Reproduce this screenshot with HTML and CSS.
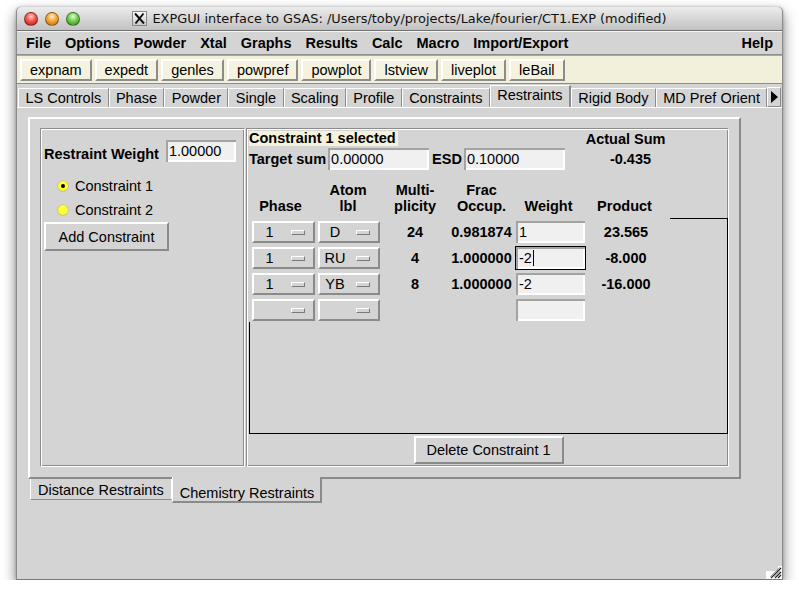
FILE: index.html
```html
<!DOCTYPE html>
<html>
<head>
<meta charset="utf-8">
<title>EXPGUI</title>
<link rel="stylesheet" href="styles.css">
</head>
<body>
<div class="window">
  <div class="titlebar">
    <div class="lights">
      <span class="light red"></span>
      <span class="light orange"></span>
      <span class="light green"></span>
    </div>
    <div class="title">
      <svg class="xicon" width="15" height="15" viewBox="0 0 15 15">
        <defs><linearGradient id="xg" x1="0" y1="0" x2="0" y2="1"><stop offset="0" stop-color="#fdfdfd"/><stop offset="1" stop-color="#c8c8c8"/></linearGradient></defs>
        <rect x="0.5" y="0.5" width="14" height="14" fill="url(#xg)" stroke="#8a8a8a"/>
        <path d="M3 2.5 L12 12.5 M11.5 2.5 L3.5 12.5" stroke="#111" stroke-width="2"/>
      </svg>
      <span>EXPGUI interface to GSAS: /Users/toby/projects/Lake/fourier/CT1.EXP (modified)</span>
    </div>
    <div></div>
  </div>

  <div class="menubar">
    <span class="menu-item">File</span>
    <span class="menu-item">Options</span>
    <span class="menu-item">Powder</span>
    <span class="menu-item">Xtal</span>
    <span class="menu-item">Graphs</span>
    <span class="menu-item">Results</span>
    <span class="menu-item">Calc</span>
    <span class="menu-item">Macro</span>
    <span class="menu-item">Import/Export</span>
    <span class="spacer"></span>
    <span class="menu-item">Help</span>
  </div>

  <div class="toolbar">
    <span class="tbtn">expnam</span>
    <span class="tbtn">expedt</span>
    <span class="tbtn">genles</span>
    <span class="tbtn">powpref</span>
    <span class="tbtn">powplot</span>
    <span class="tbtn">lstview</span>
    <span class="tbtn">liveplot</span>
    <span class="tbtn">leBail</span>
  </div>

  <div class="tabs">
    <span class="tab">LS Controls</span>
    <span class="tab">Phase</span>
    <span class="tab">Powder</span>
    <span class="tab">Single</span>
    <span class="tab">Scaling</span>
    <span class="tab">Profile</span>
    <span class="tab">Constraints</span>
    <span class="tab sel">Restraints</span>
    <span class="tab">Rigid Body</span>
    <span class="tab">MD Pref Orient</span>
    <span class="tab-arrow"><svg width="8" height="12" viewBox="0 0 8 12"><path d="M1 0 L8 6 L1 12 Z" fill="#000"/></svg></span>
  </div>

  <div class="page">
    <div class="nb">
      <div class="lpanel groove">
        <div class="weight-row">
          <span class="blabel wlabel">Restraint Weight</span>
          <span class="entry w-weight">1.00000</span>
        </div>
        <div class="radio-row first">
          <span class="radio on"></span>
          <span>Constraint 1</span>
        </div>
        <div class="radio-row">
          <span class="radio"></span>
          <span>Constraint 2</span>
        </div>
        <span class="button add-btn">Add Constraint</span>
      </div>

      <div class="rpanel groove">
        <div class="row-a">
          <span class="selected-label">Constraint 1 selected</span>
          <span class="blabel actual">Actual Sum</span>
        </div>
        <div class="row-b">
          <span class="blabel target">Target sum</span>
          <span class="entry w-long">0.00000</span>
          <span class="blabel esd">ESD</span>
          <span class="entry w-long">0.10000</span>
          <span class="blabel actual-val">-0.435</span>
        </div>

        <div class="grid head">
          <span>Phase</span>
          <span>Atom<br>lbl</span>
          <span>Multi-<br>plicity</span>
          <span>Frac<br>Occup.</span>
          <span>Weight</span>
          <span>Product</span>
        </div>

        <div class="box">
          <div class="grid rows">
            <span class="mbtn c1"><span class="mlabel">1</span><span class="ind"></span></span>
            <span class="mbtn c2"><span class="mlabel">D</span><span class="ind"></span></span>
            <span class="num">24</span>
            <span class="num">0.981874</span>
            <span class="entry w-weightcol">1</span>
            <span class="num">23.565</span>

            <span class="mbtn c1"><span class="mlabel">1</span><span class="ind"></span></span>
            <span class="mbtn c2"><span class="mlabel">RU</span><span class="ind"></span></span>
            <span class="num">4</span>
            <span class="num">1.000000</span>
            <span class="entry w-weightcol focus">-2<span class="cursor"></span></span>
            <span class="num">-8.000</span>

            <span class="mbtn c1"><span class="mlabel">1</span><span class="ind"></span></span>
            <span class="mbtn c2"><span class="mlabel">YB</span><span class="ind"></span></span>
            <span class="num">8</span>
            <span class="num">1.000000</span>
            <span class="entry w-weightcol">-2</span>
            <span class="num">-16.000</span>

            <span class="mbtn c1"><span class="mlabel"></span><span class="ind"></span></span>
            <span class="mbtn c2"><span class="mlabel"></span><span class="ind"></span></span>
            <span class="num"></span>
            <span class="num"></span>
            <span class="entry w-weightcol"></span>
            <span class="num"></span>
          </div>
        </div>

        <div class="del-wrap"><span class="button del-btn">Delete Constraint 1</span></div>
      </div>
    </div>

    <div class="btabs">
      <span class="btab">Distance Restraints</span>
      <span class="btab sel">Chemistry Restraints</span>
    </div>
  </div>

  <svg class="grip" width="16" height="15" viewBox="0 0 16 15">
    <rect x="0" y="0" width="16" height="15" fill="#fff"/>
    <rect x="0" y="0" width="16" height="2" fill="#d4d4d4"/>
    <rect x="0" y="0" width="12" height="7" fill="#d4d4d4"/>
    <path d="M15 4 L5 14 M15 8 L9 14 M15 11 L12 14" stroke="#222" stroke-width="1.2"/>
    <path d="M14 3 L4 13 M14 7 L8 13" stroke="#999" stroke-width="0.8"/>
  </svg>
</div>
</body>
</html>
```

FILE: styles.css
```css
* { box-sizing: border-box; }

body {
  margin: 0;
  background: #ffffff;
  font-family: "Liberation Sans", Arial, Helvetica, sans-serif;
  font-size: 14.5px;
  color: #000;
}

.window {
  margin: 7px 0 0 16px;
  width: 767px;
  height: 573px;
  background: #d4d4d4;
  display: flex;
  flex-direction: column;
  position: relative;
  border-left: 1px solid #8a8a8a;
  border-right: 1px solid #8a8a8a;
  border-bottom: 1px solid #7a7a7a;
  box-shadow: 0 6px 14px rgba(0, 0, 0, 0.5), 0 0 3px rgba(0,0,0,0.25);
  border-radius: 5px 5px 0 0;
}

/* title bar */
.titlebar {
  height: 24px;
  flex: none;
  display: grid;
  grid-template-columns: 1fr auto 1fr;
  align-items: center;
  background: linear-gradient(#ececec, #c2c2c2);
  border-bottom: 1px solid #707070;
  border-radius: 5px 5px 0 0;
}
.lights { display: flex; gap: 7px; padding-left: 7px; }
.light {
  width: 14px; height: 14px; border-radius: 50%;
  border: 1px solid rgba(0,0,0,0.35);
}
.red { background: radial-gradient(circle at 50% 30%, #ffd0c8 0, #f0574e 45%, #b8140f 100%); }
.orange { background: radial-gradient(circle at 50% 30%, #ffeccc 0, #f3a63b 45%, #c06a05 100%); }
.green { background: radial-gradient(circle at 50% 30%, #e0ffd0 0, #74cc4e 45%, #2f8a1a 100%); }

.title {
  display: flex;
  align-items: center;
  gap: 5px;
  font-family: "DejaVu Sans", "Lucida Grande", sans-serif;
  font-size: 12.9px;
  color: #111;
  white-space: nowrap;
}
.xicon { display: block; }

/* menu */
.menubar {
  height: 24px;
  flex: none;
  display: flex;
  align-items: center;
  padding: 0 2px;
  border-top: 1px solid #f4f4f4;
  border-bottom: 1px solid #8c8c8c;
  font-weight: bold;
}
.menu-item { padding: 0 7px; }
.spacer { flex: 1; }

/* toolbar */
.toolbar {
  height: 29px;
  flex: none;
  display: flex;
  align-items: center;
  gap: 3px;
  padding: 0 3px;
  background: #f2f0db;
  border-top: 1px solid #a8a8a8;
  border-bottom: 1px solid #8c8c8c;
}
.tbtn {
  height: 22px;
  display: flex;
  align-items: center;
  padding: 0 8px;
  background: #f5f3df;
  border: 2px solid;
  border-color: #ffffff #8c8c8c #8c8c8c #ffffff;
  white-space: nowrap;
}

/* tabs */
.tabs {
  height: 23px;
  flex: none;
  display: flex;
  align-items: flex-end;
  padding-left: 1px;
  overflow: hidden;
}
.tab {
  height: 19px;
  flex: none;
  white-space: nowrap;
  display: flex;
  align-items: center;
  padding: 0 6.4px;
  border-top: 1px solid #fff;
  border-left: 1px solid #fff;
  border-right: 1px solid #8c8c8c;
}
.tab.sel {
  height: 23px;
  margin-bottom: -1px;
  padding-bottom: 4px;
  background: #d4d4d4;
  position: relative;
  z-index: 1;
  border-right: 2px solid #8c8c8c;
}
.tab-arrow {
  flex: none;
  height: 20px;
  width: 14px;
  display: flex;
  align-items: center;
  justify-content: center;
  border: 1px solid;
  border-color: #fff #8c8c8c #8c8c8c #fff;
}

/* page */
.page {
  flex: 1;
  border-top: 1px solid #ffffff;
  padding: 9px 0 0 11px;
}
.nb {
  width: 713px;
  height: 362px;
  border: 2px solid;
  border-color: #ffffff #8a8a8a #8a8a8a #ffffff;
  display: flex;
  gap: 1px;
  padding: 9px 10px 10px 10px;
}
.groove {
  border: 1px solid;
  border-color: #8c8c8c #ffffff #ffffff #8c8c8c;
  box-shadow: inset 1px 1px 0 #ffffff, inset -1px -1px 0 #8c8c8c;
}
.lpanel {
  width: 205px;
  padding: 10px 0 0 2px;
  display: flex;
  flex-direction: column;
  align-items: flex-start;
}
.rpanel {
  width: 483px;
  padding: 1px 0 0 2px;
  display: flex;
  flex-direction: column;
  align-items: flex-start;
}
.rpanel > *, .lpanel > * { flex-shrink: 0; }

.blabel { font-weight: bold; }

.entry {
  height: 24px;
  border: 1px solid #d4d4d4;
  display: flex;
  align-items: center;
  background: #f0f0f0;
  box-shadow: inset 2px 2px 0 #a3a3a3, inset -2px -2px 0 #ffffff;
  padding: 0 3px;
  white-space: nowrap;
}
.entry.focus { border-color: #000; }
.cursor {
  display: inline-block;
  width: 1px;
  height: 16px;
  background: #000;
  margin-left: 1px;
}

.weight-row {
  display: flex;
  align-items: center;
  gap: 6px;
  margin-left: 1px;
  height: 24px;
}
.wlabel { padding-top: 6px; }
.w-weight { width: 72px; }

.radio-row {
  display: flex;
  align-items: center;
  height: 24px;
  padding-left: 15px;
  gap: 7px;
}
.radio-row.first { margin-top: 11px; }
.radio {
  width: 10px; height: 10px; border-radius: 50%;
  background: #ffff3a;
  box-shadow: 0 0 0 0.5px #b5b54a;
  display: flex; align-items: center; justify-content: center;
}
.radio.on::after {
  content: "";
  width: 4px; height: 4px; border-radius: 50%;
  background: #000;
}

.button {
  display: flex;
  align-items: center;
  justify-content: center;
  border: 2px solid;
  border-color: #ffffff #8a8a8a #8a8a8a #ffffff;
  background: #d4d4d4;
  white-space: nowrap;
}
.add-btn {
  width: 125px;
  height: 29px;
  margin-left: 1px;
  margin-top: 0;
}

/* right panel */
.row-a {
  display: flex;
  align-items: center;
  height: 16px;
}
.selected-label {
  font-weight: bold;
  background: #f4f2dc;
  height: 15px;
  line-height: 15px;
  padding-right: 2px;
}
.actual { margin-left: 188px; margin-top: 1px; }

.row-b {
  display: flex;
  align-items: center;
  height: 24px;
  margin-top: 1px;
}
.target { margin-right: 1px; }
.w-long { width: 103px; }
.esd { margin: 0 1px 0 2px; }
.actual-val { margin-left: 44px; }

.grid {
  display: grid;
  grid-template-columns: 67px 66px 66px 67px 73px 82px;
  width: 421px;
}
.head {
  margin-top: 11px;
  font-weight: bold;
  line-height: 16px;
  height: 32px;
  align-items: end;
  text-align: center;
}
.head span:first-child { padding-right: 4px; }
.head span:nth-child(2) { padding-right: 2px; }
.head span:nth-child(5) { padding-right: 6px; }
.head span:nth-child(6) { padding-right: 9px; }

.box {
  margin-top: 4px;
  width: 479px;
  height: 216px;
  border: 1px solid #000;
}
.rows {
  margin: -1px 0 0 -1px;
  padding-top: 2px;
  background: #d4d4d4;
  grid-auto-rows: 24px;
  row-gap: 2px;
  position: relative;
  font-weight: bold;
  align-items: center;
}
.num { text-align: center; }
.rows .num:nth-child(6n) { padding-right: 6px; }

.mbtn {
  height: 22px;
  display: flex;
  align-items: center;
  background: #d4d4d4;
  border: 2px solid;
  border-color: #ffffff #8a8a8a #8a8a8a #ffffff;
  font-weight: normal;
}
.mbtn.c1 { width: 63px; margin-left: 3px; }
.mbtn.c2 { width: 62px; margin-left: 2px; }
.mlabel { flex: 1; text-align: center; }
.ind {
  width: 14px;
  height: 5px;
  margin: 1px 8px 0 6px;
  border: 1px solid;
  border-color: #ffffff #7a7a7a #7a7a7a #ffffff;
  background: #d4d4d4;
}
.w-weightcol { width: 71px; font-weight: normal; }

.del-wrap {
  width: 100%;
  display: flex;
  justify-content: center;
  margin-top: 2px;
}
.del-btn { width: 150px; height: 28px; }

/* bottom tabs */
.btabs {
  display: flex;
  padding-left: 2px;
  align-items: flex-start;
}
.btab {
  height: 21px;
  display: flex;
  align-items: center;
  padding: 2px 7px 0;
  white-space: nowrap;
  border-left: 1px solid #fff;
  border-right: 1px solid #fff;
  border-bottom: 1px solid #8c8c8c;
}
.btab.sel {
  height: 26px;
  margin-top: -2px;
  margin-left: 0;
  padding: 7px 6px 0 7px;
  background: #d4d4d4;
  border-right: 2px solid #8a8a8a;
  border-bottom: 2px solid #8a8a8a;
  position: relative;
}

.grip {
  position: absolute;
  right: 0;
  bottom: 0;
}
```
